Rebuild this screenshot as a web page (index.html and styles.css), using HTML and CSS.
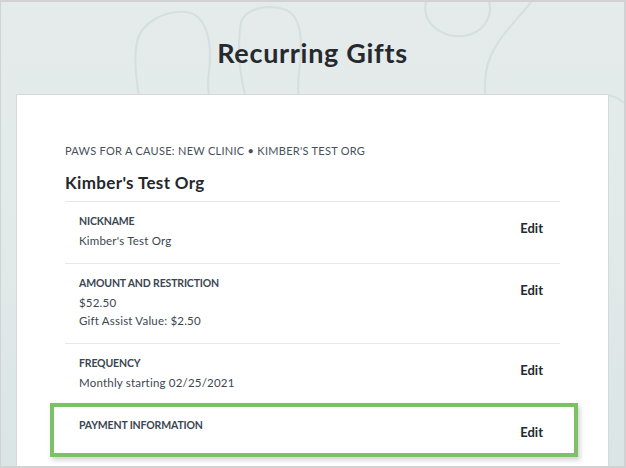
FILE: index.html
```html
<!DOCTYPE html>
<html lang="en">
<head>
<meta charset="utf-8">
<title>Recurring Gifts</title>
<link rel="stylesheet" href="styles.css">
</head>
<body>
<div class="frame">
  <svg class="decor" width="623" height="466" viewBox="0 0 623 466" aria-hidden="true">
    <g fill="none" stroke="#d6dfe0" stroke-width="2.2" stroke-linecap="round">
      <path d="M136 40 C140 20 165 8 185 10 C205 12 212 40 208 70 C205 90 210 105 215 120"/>
      <path d="M136 40 C132 60 136 80 140 110"/>
      <path d="M240 20 C245 5 270 2 285 8 C300 14 302 40 298 70 C295 95 300 110 305 125"/>
      <path d="M240 20 C236 45 238 80 252 120"/>
      <path d="M425 0 C420 20 440 36 462 34 C482 32 492 15 488 0"/>
      <path d="M530 0 C515 20 490 40 485 70 C482 95 486 110 490 125"/>
      <path d="M100 120 C105 105 115 98 125 100"/>
      <path d="M590 100 C600 90 612 92 622 100"/>
    </g>
  </svg>
  <header class="hero">
    <h1 class="page-title">Recurring Gifts</h1>
  </header>
  <main class="card">
    <p class="crumb">PAWS FOR A CAUSE: NEW CLINIC • KIMBER'S TEST ORG</p>
    <h2 class="org">Kimber's Test Org</h2>
    <ul class="rows">
      <li class="row">
        <div class="info">
          <div class="label">NICKNAME</div>
          <div class="values">
            <div class="value">Kimber's Test Org</div>
          </div>
        </div>
        <a class="edit" href="#">Edit</a>
      </li>
      <li class="row">
        <div class="info">
          <div class="label">AMOUNT AND RESTRICTION</div>
          <div class="values">
            <div class="value">$52.50</div>
            <div class="value">Gift Assist Value: $2.50</div>
          </div>
        </div>
        <a class="edit" href="#">Edit</a>
      </li>
      <li class="row">
        <div class="info">
          <div class="label">FREQUENCY</div>
          <div class="values">
            <div class="value">Monthly starting 02/25/2021</div>
          </div>
        </div>
        <a class="edit" href="#">Edit</a>
      </li>
      <li class="row row-highlight">
        <div class="info">
          <div class="label">PAYMENT INFORMATION</div>
        </div>
        <a class="edit" href="#">Edit</a>
        <span class="highlight"></span>
      </li>
    </ul>
  </main>
</div>
</body>
</html>
```

FILE: styles.css
```css
* { box-sizing: border-box; }
html, body { margin: 0; padding: 0; }
body {
  font-family: "Lato", "Open Sans", Arial, sans-serif;
  color: #3b4550;
  background: #d2d4d4;
}
.frame {
  position: relative;
  width: 626px;
  height: 468px;
  border-style: solid;
  border-color: #d0d2d3;
  border-width: 2px 2px 2px 1px;
  background: linear-gradient(to bottom, #e5ebeb 0%, #e3eaea 40%, #dbe5e6 100%);
  display: flex;
  flex-direction: column;
  overflow: hidden;
  padding: 0 15px;
}
.decor {
  position: absolute;
  top: 0;
  left: 0;
  z-index: 0;
  pointer-events: none;
}
.hero {
  position: relative;
  z-index: 1;
  padding: 35px 0 25px;
  text-align: center;
}
.page-title {
  margin: 0;
  font-size: 27px;
  line-height: 32px;
  font-weight: 700;
  letter-spacing: 0.7px;
  color: #26292d;
}
.card {
  position: relative;
  z-index: 1;
  flex: 1;
  background: #fff;
  border: 1px solid #d5d9da;
  border-bottom: 0;
  padding: 48px 48px 0;
}
.crumb {
  margin: 0;
  font-size: 11px;
  line-height: 16px;
  letter-spacing: 0.28px;
  color: #47515b;
}
.org {
  margin: 13px 0 7px;
  font-size: 17px;
  line-height: 22px;
  font-weight: 700;
  letter-spacing: 0.35px;
  color: #24282c;
}
.rows {
  list-style: none;
  margin: 0;
  padding: 0;
}
.row {
  position: relative;
  display: flex;
  justify-content: space-between;
  align-items: flex-start;
  border-top: 1px solid #e5e7e8;
  padding: 11px 17px 13px 14px;
}
.label {
  font-size: 10.5px;
  line-height: 16px;
  font-weight: 700;
  letter-spacing: -0.15px;
  color: #3a4651;
}
.values { margin-top: 3px; }
.value {
  font-size: 11.5px;
  line-height: 18px;
  letter-spacing: 0.2px;
  color: #3d4650;
}
.edit {
  margin-top: 7px;
  font-size: 13px;
  line-height: 16px;
  font-weight: 700;
  color: #23292e;
  text-decoration: none;
}
.highlight {
  position: absolute;
  left: -15px;
  right: -18px;
  top: -3px;
  height: 54px;
  border: 4px solid #7cc166;
  box-shadow: 2px 3px 5px rgba(0, 0, 0, 0.18);
  pointer-events: none;
}
```
